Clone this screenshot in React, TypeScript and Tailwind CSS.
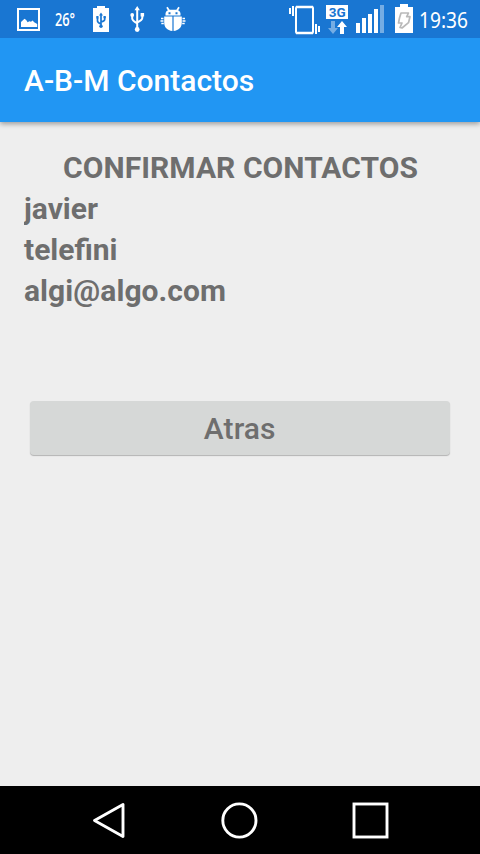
import React from 'react';

function ImageIcon() {
  return (
    <svg className="h-[38px] w-[23px]" viewBox="17 0 23 38">
      <rect x="18" y="9" width="21" height="21" fill="none" stroke="#fff" strokeWidth="2" />
      <path d="M21 27v-5l3.500-3.300 1.700 1.300 1.400 2.200 1.800-1 1.600.6 1.600-1.200 1.600 1.700 3 1.700V27z" fill="#fff" />
    </svg>
  );
}

function UsbBatteryIcon() {
  return (
    <svg className="h-[38px] w-4" viewBox="93 0 16 38">
      <path d="M93 8h4V6h8v2h4v24H93z" fill="#fff" />
      <path d="M101 14v13M97.500 17.500v3.500q0 1.500 3.500 3M104.700 17v2.500q0 1.500-3.700 2.500" stroke="#1976d2" strokeWidth="1.700" fill="none" />
      <path d="M99 15.500L101 12.500l2 3zM96.300 16h2.200v2.500h-2.200zM103.500 16h2.300v2.200h-2.300z" fill="#1976d2" />
      <circle cx="101" cy="26.300" r="1.700" fill="#1976d2" />
    </svg>
  );
}

function UsbIcon() {
  return (
    <svg className="h-[38px] w-4" viewBox="129 0 16 38">
      <path d="M137.200 9v20M132.200 15v3.500q0 2 5 5M142.300 14v4q0 2-5.100 4.500" stroke="#fff" strokeWidth="2" fill="none" />
      <path d="M134.500 10.300L137.200 6l2.700 4.300zM140.600 13h3.500v3.500h-3.500z" fill="#fff" />
      <circle cx="132.200" cy="15" r="1.900" fill="#fff" />
      <circle cx="137.200" cy="29.500" r="2.400" fill="#fff" />
    </svg>
  );
}

function BugIcon() {
  return (
    <svg className="h-[38px] w-[26px]" viewBox="160 0 26 38">
      <path d="M167 7.200l2.300 3.800M179 7.200l-2.300 3.800" stroke="#fff" strokeWidth="1.700" />
      <path d="M165.500 15.500v-2q.5-3.300 4-3.800h7q3.500.5 4 3.800v2zM164.200 16.500h8.200v14.500c-5.300-.6-8.200-3.600-8.200-8.500zM173.600 16.500h8.200v6c0 4.900-2.900 7.900-8.200 8.500z" fill="#fff" />
      <path d="M168.500 12.300h2v2h-2zM175.500 12.300h2v2h-2z" fill="#1976d2" />
      <path d="M161 18.500h2.500M160.500 21h3M161.300 23.500h2.500M182.500 18.500h2.500M182.500 21h3M182.200 23.500h2.500" stroke="#fff" strokeWidth="1.700" />
    </svg>
  );
}

function VibrateIcon() {
  return (
    <svg className="h-[38px] w-8" viewBox="288 0 32 38">
      <rect x="296" y="7" width="17" height="26" rx="1" fill="none" stroke="#fff" strokeWidth="2" />
      <path d="M296 7h17M296 33h17" stroke="#fff" strokeWidth="2.500" />
      <path d="M290 8v6M293 6v10M316 24v10M319 26v6" stroke="#fff" strokeWidth="2" />
    </svg>
  );
}

function MobileDataIcon() {
  return (
    <svg className="h-[38px] w-[22px]" viewBox="326 0 22 38">
      <path d="M326 5h22v14h-22z" fill="#fff" />
      <text x="337.200" y="17" textAnchor="middle" fill="#1976d2" fontSize="13.500" className="font-['Roboto',sans-serif] font-bold">3G</text>
      <path d="M331 21h4v7h3l-5 6-5-6h3z" fill="#75ade4" />
      <path d="M342 21l5 6h-3v7h-4v-7h-3z" fill="#fff" />
    </svg>
  );
}

function SignalIcon() {
  return (
    <svg className="h-[38px] w-7" viewBox="356 0 28 38">
      <path d="M356 23h4v10h-4zM362 18h4v15h-4zM368 14h4v19h-4zM374 9h4v24h-4z" fill="#fff" />
      <path d="M380 5h4v28h-4z" fill="#75ade4" />
    </svg>
  );
}

function ChargingIcon() {
  return (
    <svg className="h-[38px] w-[18px]" viewBox="395 0 18 38">
      <path d="M395 7h5V4h8v3h5v26h-18z" fill="#fff" />
      <path d="M401 13h7.500l-1.800 3.700h3.300l-1.500 6-6.500 5.300-2-.5 2-4.500h-3.500l1-5z" fill="none" stroke="#b9b9b9" strokeWidth="1.700" strokeLinejoin="round" />
    </svg>
  );
}

function StatusBar() {
  return (
    <div className="relative z-10 flex h-[38px] shrink-0 items-center bg-[#1976d2] pl-[17px] text-white">
      <ImageIcon />
      <div className="ml-[15px] w-5">
        <span className="block origin-left scale-x-[0.71] font-['Open_Sans',sans-serif] text-[18px] leading-[38px] font-semibold">26°</span>
      </div>
      <div className="ml-[18px] flex gap-5"><UsbBatteryIcon /><UsbIcon /></div>
      <div className="ml-[15px]"><BugIcon /></div>
      <div className="ml-[102px] flex"><VibrateIcon /></div>
      <div className="ml-1.5 flex gap-2"><MobileDataIcon /><SignalIcon /></div>
      <div className="ml-[11px]"><ChargingIcon /></div>
      <div className="ml-1.5 w-[50px]">
        <span className="block origin-left scale-x-[0.87] font-['Noto_Sans',sans-serif] text-[22px] leading-[38px]">19:36</span>
      </div>
    </div>
  );
}

export default function App() {
  return (
    <div className="flex h-[854px] w-[480px] flex-col overflow-hidden bg-[#eeeeee] font-['Roboto',sans-serif]">
      <StatusBar />
      <header className="flex h-[84px] shrink-0 items-center bg-[#2196f3] px-6 shadow-[0_2px_5px_rgba(0,0,0,0.35)]">
        <h1 className="text-[30px] leading-[35px] font-medium text-white">A-B-M Contactos</h1>
      </header>
      <main className="flex flex-1 flex-col px-6 pt-[25px] text-[30px] leading-[41px] font-bold text-[#6e6e6e]">
        <h2 className="pl-px text-center tracking-[0.06px]">CONFIRMAR CONTACTOS</h2>
        <p className="overflow-hidden">javier</p>
        <p>telefini</p>
        <p className="tracking-[0.06px]">algi@algo.com</p>
        <button className="mr-1.5 ml-[5.5px] mt-[90px] h-[54px] rounded-[4px] bg-[#d6d8d7] font-medium tracking-[0.1px] shadow-[0_1px_1px_rgba(0,0,0,0.25)]">Atras</button>
      </main>
      <nav className="flex h-[68px] shrink-0 items-center bg-black pl-[92px]">
        <svg className="h-[68px] w-[34px]" viewBox="92 786 34 68" fill="none" stroke="#fff" strokeWidth="2.900">
          <path d="M123 804.500v32L94.500 820.500z" strokeLinejoin="round" />
        </svg>
        <svg className="ml-[94px] h-[68px] w-[38px]" viewBox="220 786 38 68" fill="none" stroke="#fff" strokeWidth="2.900">
          <circle cx="239.400" cy="820.500" r="16.600" />
        </svg>
        <svg className="ml-[94px] h-[68px] w-[38px]" viewBox="352 786 38 68" fill="none" stroke="#fff" strokeWidth="2.900">
          <rect x="354" y="804" width="33" height="33" />
        </svg>
      </nav>
    </div>
  );
}
